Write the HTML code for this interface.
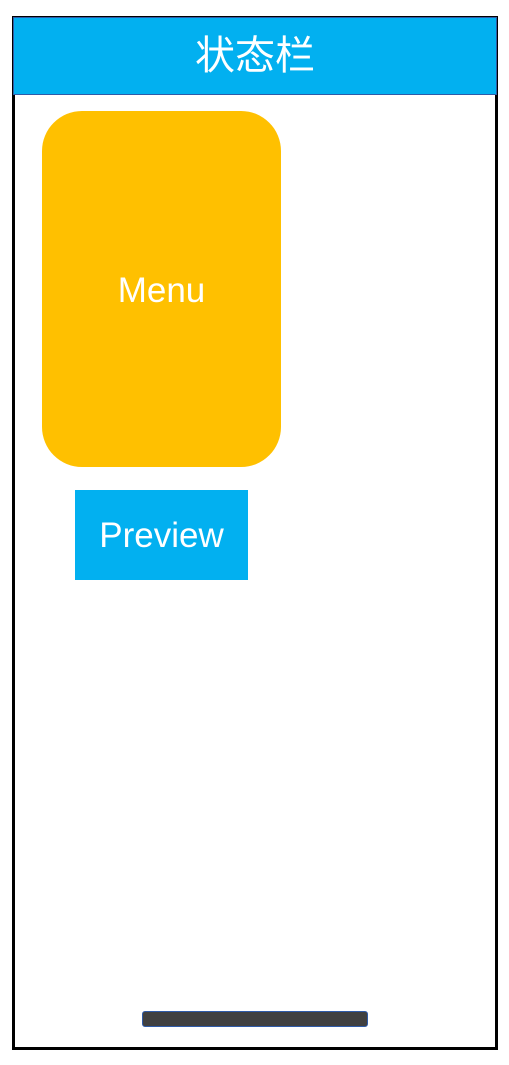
<!DOCTYPE html>
<html><head><meta charset="utf-8"><style>
*{margin:0;padding:0;box-sizing:border-box}
body{width:509px;height:1065px;background:#fff;position:relative;overflow:hidden;font-family:"Liberation Sans","Noto Sans CJK SC",sans-serif}
.frame{position:absolute;left:12px;top:16px;width:486px;height:1034px;border:3px solid #000}
.bar{position:absolute;left:13px;top:17px;width:484px;height:78px;background:#02b0f0;border:1px solid #2f5ba8;color:#fff;font-size:40px;text-align:center;line-height:76px}
.menu{position:absolute;left:42px;top:111px;width:239px;height:356px;background:#ffc000;border-radius:40px;color:#fff;font-size:35px;display:flex;align-items:center;justify-content:center;padding-top:4px}
.prev{position:absolute;left:75px;top:490px;width:173px;height:90px;background:#02b0f0;color:#fff;font-size:35px;display:flex;align-items:center;justify-content:center;padding-top:2px}
.home{position:absolute;left:142px;top:1011px;width:226px;height:16px;background:#404040;border:1px solid #2f5ba8;border-radius:3px}
</style></head><body>
<div class="frame"></div>
<div class="bar">状态栏</div>
<div class="menu">Menu</div>
<div class="prev">Preview</div>
<div class="home"></div>
</body></html>
